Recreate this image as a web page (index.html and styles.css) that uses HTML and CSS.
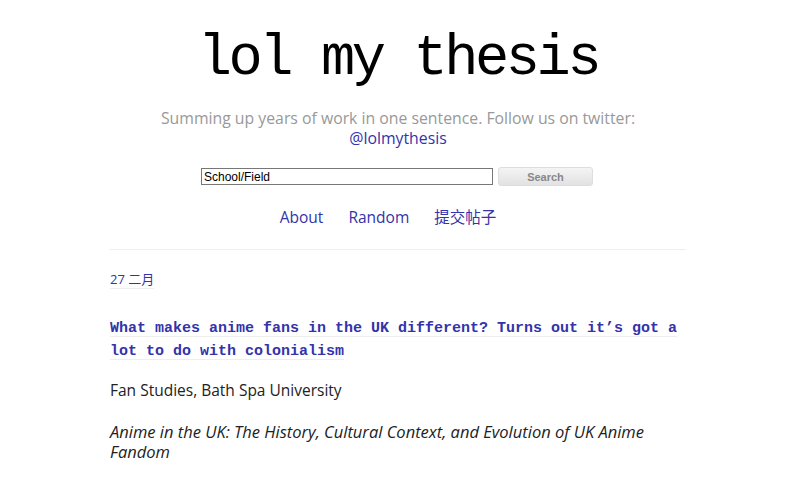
FILE: index.html
```html
<!DOCTYPE html>
<html>
<head>
<meta charset="utf-8">
<link rel="stylesheet" href="styles.css">
</head>
<body>
<div class="page">
  <header class="header">
    <h1 class="site-title">lol my thesis</h1>
    <p class="tagline">Summing up years of work in one sentence. Follow us on twitter:<br><a class="link" href="#">@lolmythesis</a></p>
    <form class="search">
      <input class="search-input" type="text" value="School/Field">
      <button class="search-btn" type="button">Search</button>
    </form>
    <nav class="nav">
      <a class="link" href="#">About</a>
      <a class="link" href="#">Random</a>
      <a class="link" href="#">提交帖子</a>
    </nav>
  </header>
  <main class="content">
    <div class="post-date"><a class="date-link" href="#">27 二月</a></div>
    <h2 class="post-title"><a href="#">What makes anime fans in the UK different? Turns out it’s got a lot to do with colonialism</a></h2>
    <p class="post-field">Fan Studies, Bath Spa University</p>
    <p class="post-thesis">Anime in the UK: The History, Cultural Context, and Evolution of UK Anime Fandom</p>
  </main>
</div>
</body>
</html>
```

FILE: styles.css
```css
html, body {
  margin: 0;
  padding: 0;
  background: #fff;
}
body {
  font-family: "Open Sans", "Noto Sans CJK SC", sans-serif;
  color: #222;
}
.page {
  width: 576px;
  padding-right: 4px;
  margin: 0 auto;
}
.header {
  text-align: center;
  border-bottom: 1px solid #eee;
  padding-bottom: 21px;
}
.site-title {
  margin: 0;
  padding-top: 27px;
  font-family: "Liberation Mono", monospace;
  font-weight: normal;
  font-size: 57px;
  letter-spacing: -3.4px;
  line-height: 64px;
  color: #000;
}
.tagline {
  margin: 17px -40px 0;
  font-size: 15.8px;
  line-height: 20px;
  color: #999;
}
.link {
  color: #3333aa;
  text-decoration: none;
}
.search {
  margin-top: 19px;
  display: flex;
  justify-content: center;
  align-items: center;
  gap: 5px;
  padding-right: 2px;
}
.search-input {
  box-sizing: border-box;
  width: 292px;
  height: 17px;
  margin: 0;
  padding: 0 2px;
  border: 1px solid #777;
  font-family: "Liberation Sans", Arial, sans-serif;
  font-size: 12px;
  color: #000;
}
.search-btn {
  box-sizing: border-box;
  width: 95px;
  height: 19px;
  margin: 0;
  padding: 0;
  border: 1px solid #ddd;
  border-radius: 3px;
  background: linear-gradient(#f4f4f4, #e2e2e2);
  font-family: "Liberation Sans", Arial, sans-serif;
  font-weight: bold;
  font-size: 11px;
  color: #888;
}
.nav {
  margin-top: 20px;
  display: flex;
  justify-content: center;
  gap: 25px;
  padding-right: 20px;
  font-size: 15.5px;
  line-height: 22px;
}
.content {
  padding-top: 20px;
}
.post-date {
  font-size: 13px;
  line-height: 18px;
}
.date-link {
  color: #3333aa;
  text-decoration: none;
  border-bottom: 1px solid #eee;
}
.post-title {
  margin: 29px 0 0;
  font-family: "Liberation Mono", monospace;
  font-weight: bold;
  font-size: 15px;
  line-height: 23px;
}
.post-title a {
  color: #3333aa;
  text-decoration: underline;
  text-decoration-color: #eee;
  text-underline-offset: 4px;
}
.post-field {
  margin: 16px 0 0;
  font-size: 15.5px;
  line-height: 22px;
}
.post-thesis {
  margin: 21px 0 0;
  font-style: italic;
  font-size: 16.5px;
  line-height: 20px;
}
```
